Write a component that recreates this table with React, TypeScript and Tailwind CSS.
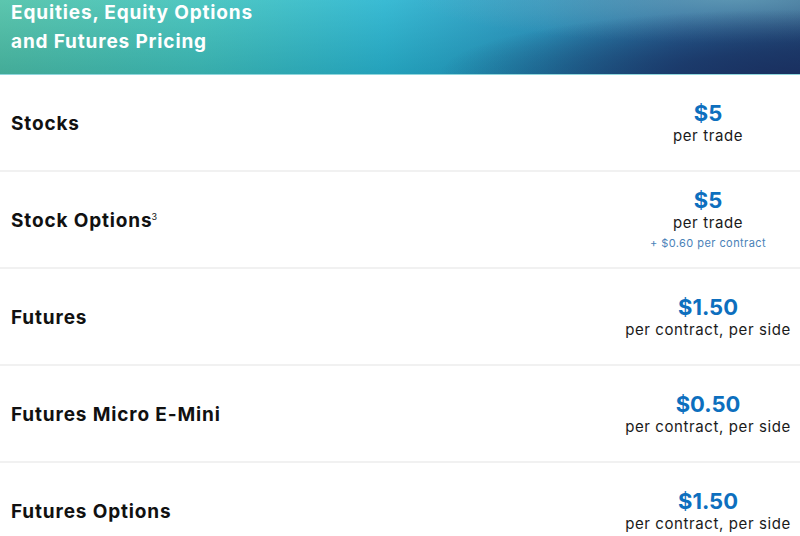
import React from "react";

const rows = [
  { label: "Stocks", price: "$5", sub: "per trade" },
  { label: "Stock Options", sup: "3", price: "$5", sub: "per trade", note: "+ $0.60 per contract" },
  { label: "Futures", price: "$1.50", sub: "per contract, per side" },
  { label: "Futures Micro E-Mini", price: "$0.50", sub: "per contract, per side" },
  { label: "Futures Options", price: "$1.50", sub: "per contract, per side" },
];

export default function App() {
  return (
    <div className="w-[800px] h-[536px] overflow-hidden bg-white" style={{ fontFamily: "Inter, 'Open Sans', sans-serif" }}>
      <div
        className="h-[77px] px-[11px] border-b border-[#8fd6dc]"
        style={{
          background:
            "radial-gradient(ellipse 45% 85% at 100% 100%, #1a3060 0%, rgba(26,48,96,0.75) 35%, rgba(26,48,96,0) 100%), radial-gradient(ellipse 40% 60% at 92% 0%, rgba(110,170,190,0.7) 0%, rgba(110,170,190,0) 100%), linear-gradient(180deg, rgba(255,255,255,0.08) 0%, rgba(0,40,60,0.15) 100%), linear-gradient(90deg, #4fc2a8 0%, #41c3bd 25%, #2ab6d1 48%, #2490bb 68%, #22629a 85%, #1f4c80 100%)",
        }}
      >
        <div className="text-white font-bold text-[19px] leading-[29px] -mt-[2px] tracking-[0.045em]">
          Equities, Equity Options
          <br />
          and Futures Pricing
        </div>
      </div>
      {rows.map((r, i) => (
        <div key={i} className="h-[97px] flex items-center border-b-2 border-[#f1f1f1]">
          <div className="flex-1 pl-[11px] pt-[4px] text-[19px] font-bold text-[#111] tracking-[0.045em]">
            {r.label}
            {r.sup && (
              <span className="text-[9px] font-normal relative -top-[7px] -ml-[1px] tracking-normal">{r.sup}</span>
            )}
          </div>
          <div className="w-[184px] flex flex-col items-center">
            <div className="text-[22px] font-bold text-[#0d6fbe] leading-[26px]">{r.price}</div>
            <div className="text-[15px] text-[#1a1a1a] leading-[20px] tracking-[0.04em]">{r.sub}</div>
            {r.note && <div className="text-[11px] text-[#4a82b8] leading-[18px] mt-[1px] tracking-[0.04em]">{r.note}</div>}
          </div>
        </div>
      ))}
    </div>
  );
}
